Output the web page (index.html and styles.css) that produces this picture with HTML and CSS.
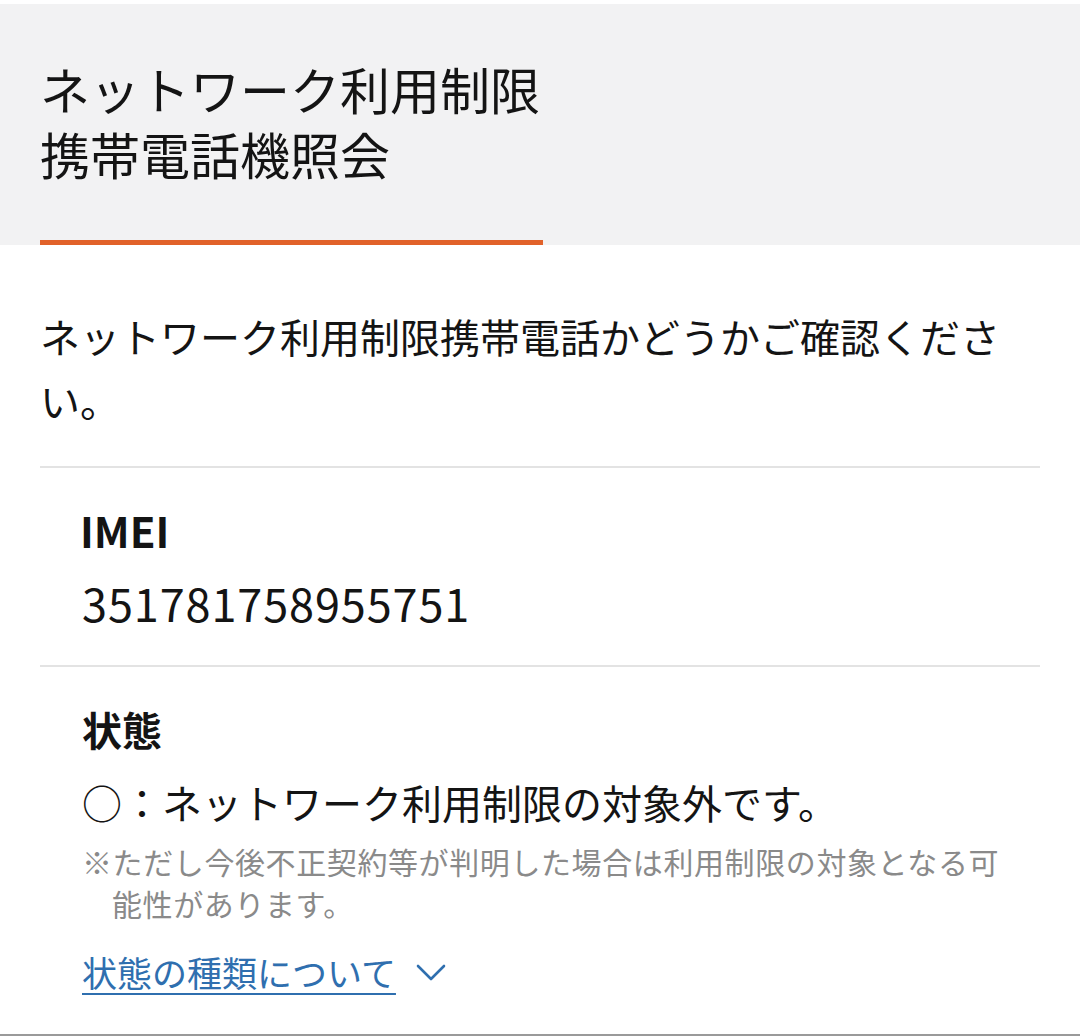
FILE: index.html
```html
<!DOCTYPE html>
<html lang="ja">
<head>
<meta charset="utf-8">
<link rel="stylesheet" href="styles.css">
</head>
<body>
<header class="head">
  <h1 class="title">ネットワーク利用制限<br>携帯電話機照会</h1>
  <div class="accent"></div>
</header>
<main class="content">
  <p class="lead">ネットワーク利用制限携帯電話かどうかご確認ください。</p>
  <section class="item">
    <h2 class="label label-latin">IMEI</h2>
    <p class="value">351781758955751</p>
  </section>
  <section class="item item-last">
    <h2 class="label">状態</h2>
    <p class="status">○：ネットワーク利用制限の対象外です。</p>
    <p class="note">※ただし今後不正契約等が判明した場合は利用制限の対象となる可能性があります。</p>
    <div class="more">
      <a class="more-link" href="#">状態の種類について</a>
      <svg class="chev" width="30" height="20" viewBox="0 0 30 20"><path d="M2 3 L15 16 L28 3" fill="none" stroke="#2f6faf" stroke-width="2.6" stroke-linecap="round" stroke-linejoin="round"/></svg>
    </div>
  </section>
</main>
</body>
</html>
```
FILE: styles.css
```css
* { box-sizing: border-box; }
html, body { margin: 0; padding: 0; background: #fff; }
body {
  font-family: "Noto Sans CJK JP", "Noto Sans", sans-serif;
  color: #141414;
  width: 1080px;
  height: 1036px;
  overflow: hidden;
  border-bottom: 2px solid #9a9a9a;
}
.head {
  margin-top: 4px;
  background: #f2f2f3;
  padding: 52px 40px 0 40px;
}
.title {
  margin: 0;
  font-weight: 400;
  font-size: 50px;
  line-height: 65px;
}
.accent {
  margin-top: 54px;
  width: 503px;
  height: 5px;
  background: #e1622a;
}
.content {
  padding: 0 40px;
}
.lead {
  margin: 59px 0 0 0;
  font-size: 40px;
  line-height: 64px;
  padding-bottom: 34px;
  border-bottom: 2px solid #e3e3e3;
}
.item {
  padding: 34px 0 34px 42px;
  border-bottom: 2px solid #e3e3e3;
}
.item-last { border-bottom: none; }
.label {
  margin: 0;
  font-size: 40px;
  line-height: 56px;
  font-weight: 700;
}
.label-latin { font-size: 42px; margin-left: -2px; }
.value {
  margin: 17px 0 0 0;
  font-size: 45px;
  line-height: 56px;
  letter-spacing: 0.9px;
}
.status {
  margin: 17px 0 0 0;
  font-size: 40px;
  line-height: 56px;
}
.note {
  margin: 10px 30px 0 0;
  font-size: 30px;
  line-height: 42px;
  letter-spacing: 0.6px;
  color: #8a8a8a;
  padding-left: 30px;
  text-indent: -30px;
}
.more {
  margin-top: 23px;
  display: flex;
  align-items: center;
  gap: 20px;
  height: 50px;
}
.more-link {
  font-size: 35px;
  line-height: 50px;
  color: #2f6faf;
  text-decoration: underline;
  text-decoration-thickness: 2px;
  text-underline-offset: 6px;
}
.chev { display: block; margin-top: 2px; }
```
